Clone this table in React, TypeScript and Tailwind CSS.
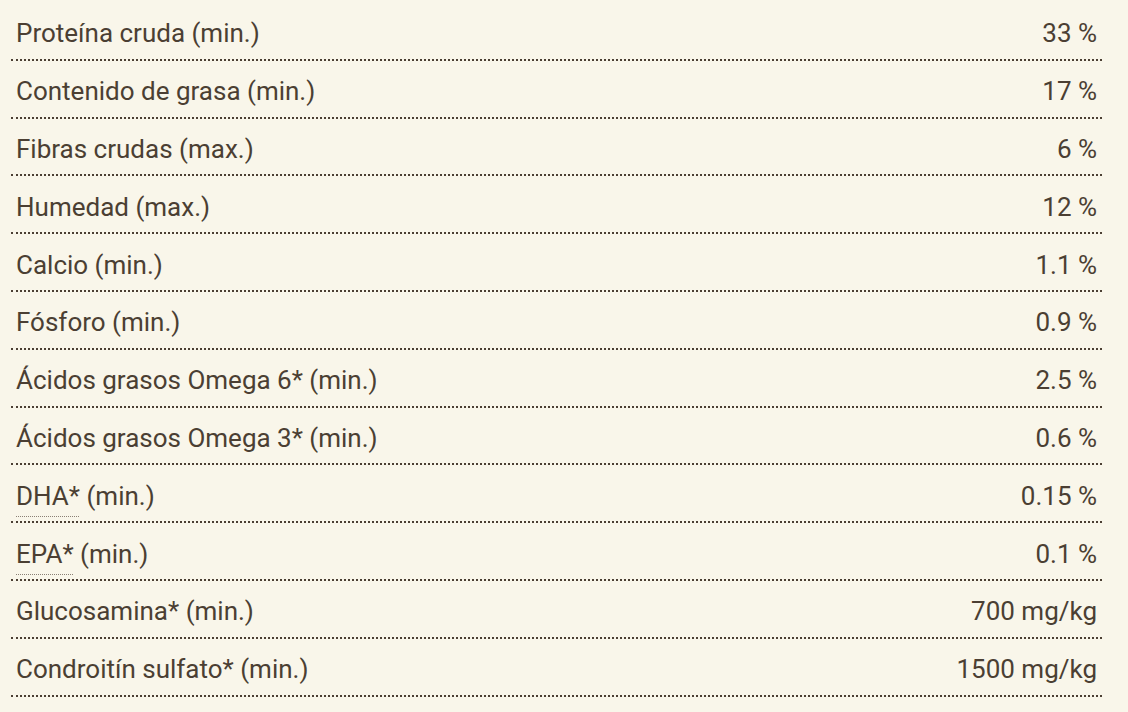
const rows: { label: string; abbr?: string; value: string }[] = [
  { label: "Proteína cruda (min.)", value: "33 %" },
  { label: "Contenido de grasa (min.)", value: "17 %" },
  { label: "Fibras crudas (max.)", value: "6 %" },
  { label: "Humedad (max.)", value: "12 %" },
  { label: "Calcio (min.)", value: "1.1 %" },
  { label: "Fósforo (min.)", value: "0.9 %" },
  { label: "Ácidos grasos Omega 6* (min.)", value: "2.5 %" },
  { label: "Ácidos grasos Omega 3* (min.)", value: "0.6 %" },
  { abbr: "DHA*", label: " (min.)", value: "0.15 %" },
  { abbr: "EPA*", label: " (min.)", value: "0.1 %" },
  { label: "Glucosamina* (min.)", value: "700 mg/kg" },
  { label: "Condroitín sulfato* (min.)", value: "1500 mg/kg" },
];

export default function App() {
  return (
    <div className="min-h-[712px] w-[1128px] bg-[#f9f6ea] pt-[3px] text-[#4b3f33] font-['Roboto',sans-serif]">
      <div className="ml-[11px] w-[1091px]">
        {rows.map((r, i) => (
          <div
            key={i}
            className="flex h-[57.8px] items-center justify-between border-b-2 border-dotted border-[#4b3f33] px-[5px] pt-[6px] text-[26px]"
          >
            <span className="whitespace-pre">
              {r.abbr && (
                <span className="underline decoration-dotted decoration-1 decoration-[#8a8075] underline-offset-[11px]">
                  {r.abbr}
                </span>
              )}
              {r.label}
            </span>
            <span>{r.value}</span>
          </div>
        ))}
      </div>
    </div>
  );
}
